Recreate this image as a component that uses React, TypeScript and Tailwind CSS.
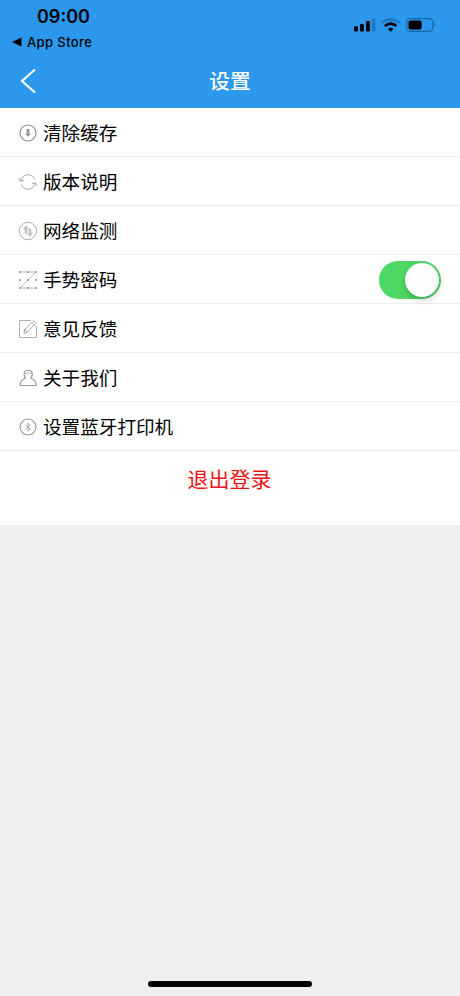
import type { ReactNode } from "react";

const svgProps = {
  width: 20,
  height: 20,
  viewBox: "0 0 20 20",
  fill: "none",
  stroke: "#a3a3a3",
  strokeWidth: 1,
  strokeLinecap: "round" as const,
  strokeLinejoin: "round" as const,
};

const ClearIcon = () => (
  <svg {...svgProps}>
    <circle cx="10" cy="10" r="8" stroke="#8c8c8c" strokeWidth="1.1" />
    <path d="M8.500 6h3v4.800h1.400L10 14l-2.900-3.200h1.400z" fill="#999999" stroke="none" />
  </svg>
);

const RefreshIcon = () => (
  <svg {...svgProps} stroke="#a8a8a8">
    <path d="M2.800 8.600A7.400 7.400 0 0 1 16.800 7.200" />
    <path d="M17.200 11.400A7.400 7.400 0 0 1 3.200 12.800" />
    <path d="M1.200 6.400l1.300 3 3.200-1.100M18.800 13.600l-1.300-3-3.200 1.100" />
  </svg>
);

const NetworkIcon = () => (
  <svg {...svgProps} stroke="#b0b0b0">
    <circle cx="10" cy="10" r="8.700" />
    <path d="M5.800 7.400L8 4.700l2.200 2.700H8.900V12H7.100V7.400zM11.100 8h1.800v4.600h1.300L12 15.300l-2.200-2.700h1.300z" strokeWidth=".7" fill="#cfcfcf" />
  </svg>
);

const GestureIcon = () => (
  <svg {...svgProps} stroke="#adadad" strokeWidth=".9">
    <path d="M2 2h16L2 18h16" />
    {[2, 10, 18].map((y) =>
      [2, 10, 18].map((x) => <circle key={`${x}-${y}`} cx={x} cy={y} r="1.100" fill="#9d9d9d" stroke="none" />),
    )}
  </svg>
);

const FeedbackIcon = () => (
  <svg {...svgProps} stroke="#b0b0b0">
    <path d="M12.500 1.500h-11v17h17v-11" />
    <path d="M6 14.200l.8-3.700 8.400-8.400q.6-.5 1.200 0l1.200 1.200q.5.600 0 1.200L9.200 13zM13.800 3.500l2.500 2.500M6.800 10.500L9.200 13" strokeWidth="1" stroke="#a6a6a6" />
  </svg>
);

const UserIcon = () => (
  <svg {...svgProps} stroke="#979797" strokeWidth="1.100">
    <path d="M7.600 10.100C4.700 6.800 5.900 2.200 10.200 2.200s5.500 4.600 2.600 7.900c3.400 1.100 5.200 3.300 5.500 7.400H2c.3-4.100 2.200-6.300 5.600-7.400z" />
    <path d="M6.500 5.700c2.300.1 3.500-.6 4.100-1.500.6 1 1.600 1.500 3.300 1.600" strokeWidth=".7" />
  </svg>
);

const BluetoothIcon = () => (
  <svg {...svgProps} stroke="#979797">
    <circle cx="10" cy="10" r="8" strokeWidth="1.100" />
    <path d="M7.700 7.900l4.600 4.200L10 14V6l2.300 1.900-4.600 4.200" strokeWidth=".8" />
  </svg>
);

const Switch = () => (
  <span className="flex h-[38px] w-[62px] justify-end rounded-full bg-[#4bd964] p-0.5">
    <span className="size-[34px] rounded-full bg-white shadow-[0_3px_6px_rgba(0,0,0,0.22)]" />
  </span>
);

const rows: { label: string; icon: ReactNode; toggle?: boolean }[] = [
  { label: "清除缓存", icon: <ClearIcon /> },
  { label: "版本说明", icon: <RefreshIcon /> },
  { label: "网络监测", icon: <NetworkIcon /> },
  { label: "手势密码", icon: <GestureIcon />, toggle: true },
  { label: "意见反馈", icon: <FeedbackIcon /> },
  { label: "关于我们", icon: <UserIcon /> },
  { label: "设置蓝牙打印机", icon: <BluetoothIcon /> },
];

const StatusIcons = () => (
  <svg width="84" height="18" viewBox="0 0 84 18" fill="none">
    <rect x="0" y="10.300" width="3.900" height="5.200" rx="1" fill="#000" />
    <rect x="6" y="8" width="3.900" height="7.500" rx="1" fill="#000" />
    <rect x="12" y="5" width="3.900" height="10.500" rx="1" fill="#000" />
    <rect x="17.800" y="2.500" width="3.600" height="13" rx="1" fill="#2278bd" />
    <path d="M27.700 6.700Q36.700 -.4 45.700 6.700" stroke="#2278bd" strokeWidth="2.400" />
    <path d="M31 10q5.700-4.800 11.400 0" stroke="#000" strokeWidth="2.800" />
    <path d="M33.900 12.900q2.800-2.200 5.600 0l-2.800 2.800z" fill="#000" />
    <rect x="52.700" y="2.600" width="26" height="12.800" rx="3.700" stroke="#1d659f" strokeWidth="1.100" />
    <rect x="54.500" y="4.400" width="13.200" height="9.200" rx="2" fill="#000" />
    <path d="M80.300 6.800c1.600.7 1.600 3.600 0 4.300z" fill="#1d659f" />
  </svg>
);

export default function App() {
  return (
    <div className="flex h-[996px] w-[460px] flex-col overflow-hidden bg-[#f0f0f0] font-['Inter','Noto_Sans_CJK_SC',sans-serif] text-black">
      <header className="h-[108px] shrink-0 bg-[#2b97ed]">
        <div className="flex h-[33px] items-start justify-between pl-[37px] pr-[22px]">
          <span className="pt-[5px] text-[18px] leading-6 font-semibold">09:00</span>
          <span className="pt-4"><StatusIcons /></span>
        </div>
        <div className="flex h-[18px] items-center gap-[5px] pl-3">
          <svg width="10" height="10" viewBox="0 0 10 10"><path d="M0 5L9.500 .5v9z" fill="#000" /></svg>
          <span className="text-[13px] leading-[18px] font-medium tracking-[0.4px]">App Store</span>
        </div>
        <div className="grid h-[57px] grid-cols-[60px_1fr_60px] items-center">
          <svg className="ml-5 mt-[3px]" width="17" height="26" viewBox="0 0 17 26" fill="none"><path d="M15 1.500L2 13l13 11.500" stroke="#fff" strokeWidth="2.200" /></svg>
          <h1 className="pt-1 text-center text-[20.700px] leading-7 font-medium text-white">设置</h1>
        </div>
      </header>
      <main className="h-[417px] shrink-0 bg-white">
        <ul>
          {rows.map((row) => (
            <li key={row.label} className="flex h-[49px] items-center border-b border-[#ededed] pt-0.5 pr-[19px] pl-[18px]">
              {row.icon}
              <span className="ml-[5px] flex-1 text-[18.600px] leading-7">{row.label}</span>
              {row.toggle && <Switch />}
            </li>
          ))}
        </ul>
        <button className="block h-[57px] w-full pr-px text-center text-[21px] leading-[57px] text-[#ef1414]">退出登录</button>
      </main>
      <footer className="flex flex-1 items-end justify-center pb-[9px]">
        <span className="h-[6px] w-[164px] rounded-full bg-black" />
      </footer>
    </div>
  );
}
